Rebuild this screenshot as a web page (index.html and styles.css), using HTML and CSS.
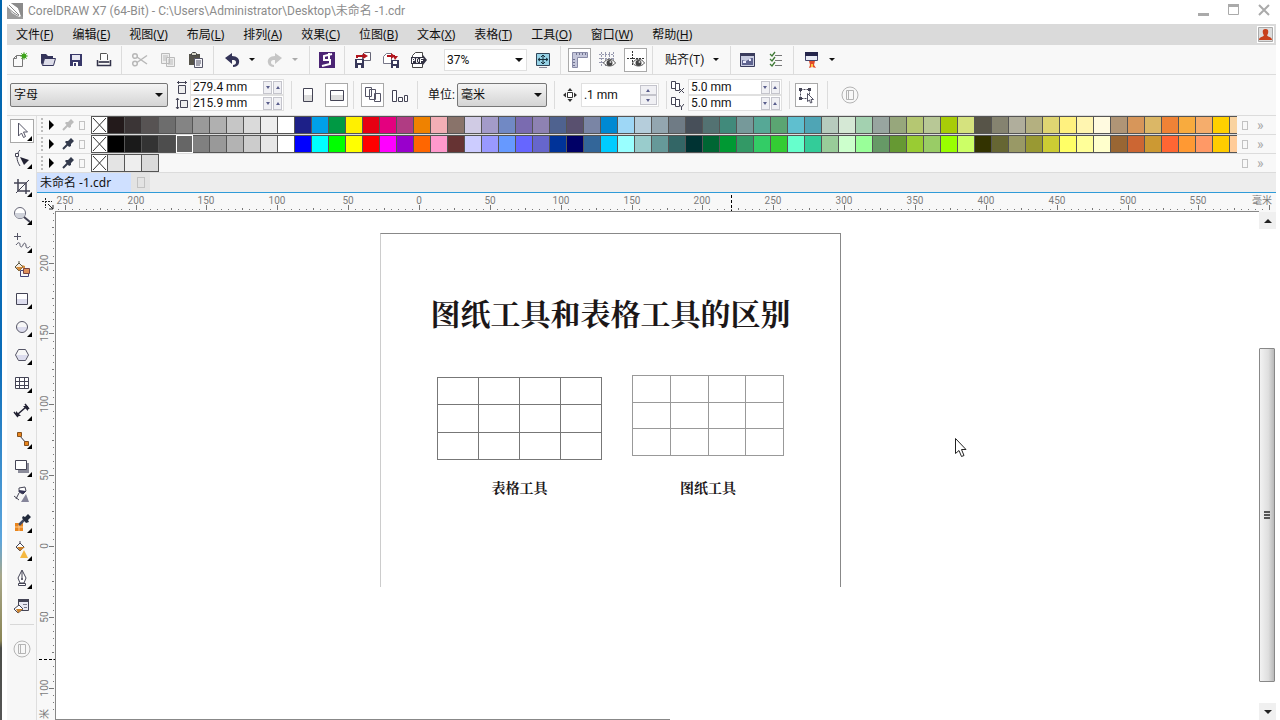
FILE: index.html
```html
<!DOCTYPE html>
<html lang="zh-CN">
<head>
<meta charset="utf-8">
<title>CorelDRAW X7 (64-Bit)</title>
<link rel="stylesheet" href="styles.css">
</head>
<body>
<div class="desktop"></div>
<div class="app">
  <header class="titlebar">
    <svg class="logo" width="16" height="16" viewBox="0 0 16 16"><path fill="#9c9c9c" d="M0 0h16v16H0z"/><path fill="#fff" d="M0 0h4l7 5 3 8-2 1-7-4-5-7z"/><path fill="#8b8b8b" d="M4 0l7 5 3 8 2 1V0z"/><path stroke="#8b8b8b" fill="none" d="M2 2l10 10M1 5l6 5 5 3"/></svg>
    <span class="title">CorelDRAW X7 (64-Bit) - C:\Users\Administrator\Desktop\未命名 -1.cdr</span>
    <div class="winctl">
      <button aria-label="最小化"><svg width="12" height="12"><path fill="#aaa" d="M0 9h11v3H0z"/></svg></button>
      <button aria-label="最大化"><svg width="12" height="12"><path fill="none" stroke="#aaa" d="M.5.5h10v10H.5z"/><path fill="#aaa" d="M0 0h11v3H0z"/></svg></button>
      <button aria-label="关闭"><svg width="13" height="12"><path fill="none" stroke="#aaa" stroke-width="2" d="M1 1l10 10M11 1L1 11"/></svg></button>
    </div>
  </header>

  <nav class="menubar">
    <button>文件(<u>F</u>)</button><button>编辑(<u>E</u>)</button><button>视图(<u>V</u>)</button><button>布局(<u>L</u>)</button><button>排列(<u>A</u>)</button><button>效果(<u>C</u>)</button><button>位图(<u>B</u>)</button><button>文本(<u>X</u>)</button><button>表格(<u>T</u>)</button><button>工具(<u>O</u>)</button><button>窗口(<u>W</u>)</button><button>帮助(<u>H</u>)</button>
    <button class="account" aria-label="登录"><svg width="17" height="17"><path fill="#fff" d="M0 0h17v17H0z"/><path fill="#ddd" stroke="#aaa" d="M1.500 1.500h14v14h-14z"/><path fill="#c8401c" d="M8.500 3c2.500 0 3 1.500 2.700 3.500-.2 1.500-.9 2-1 3 .2 1.500 4.800 1 4.800 4.500H2c0-3.500 4.600-3 4.800-4.500-.1-1-.8-1.500-1-3C5.500 4.500 6 3 8.500 3z"/></svg></button>
  </nav>

  <div class="toolbar standard">
    <button class="tool" aria-label="新建"><svg width="18" height="18"><path fill="#fafafa" stroke="#777" d="M2.500 15.500v-8l3-3h6v11zM2.500 7.500h3v-3"/><circle cx="13" cy="5" r="2.500" fill="#3da51a"/><path stroke="#3da51a" d="M13 1v8M9 5h8M10 2l6 6M16 2l-6 6" stroke-width=".7"/></svg></button>
    <button class="tool" aria-label="打开"><svg width="18" height="18"><path fill="#34345a" d="M2 3h5l2 2h5v3H6l-3 6-1-2z"/><path fill="#dcdce8" stroke="#34345a" d="M5.500 7.500h11l-2 7h-11z"/></svg></button>
    <button class="tool" aria-label="保存"><svg width="18" height="18"><path fill="#39396a" d="M3 3h12v12H3z"/><path fill="#e8e8f2" d="M5 4h8v5H5z"/><path fill="#fff" d="M6 11h5v4H6z"/><path fill="#39396a" d="M7 12h2v3H7z"/></svg></button>
    <button class="tool" aria-label="打印"><svg width="18" height="18"><path fill="#fff" stroke="#555" d="M5.500 9V2.500h6l1 1V9"/><path fill="#bbb" d="M3 10h13v2H3z"/><path fill="none" stroke="#33334a" stroke-width="1.500" d="M2.500 9v5.500h13V9M4 11h10"/></svg></button>
    <i class="sep"></i>
    <button class="tool" aria-label="剪切"><svg width="18" height="18"><g fill="none" stroke="#b8b8b8" stroke-width="1.500"><circle cx="4" cy="5" r="2.300"/><circle cx="4" cy="12.500" r="2.300"/><path d="M6 6l10 7M6 11.500l10-7"/></g></svg></button>
    <button class="tool" aria-label="复制"><svg width="18" height="18"><path fill="#eee" stroke="#bbb" d="M2.500 2.500h8v10h-8zM7.500 6.500h8v9h-8zM4 5h5M4 7h3M4 9h3M9 9h5M9 11h5M9 13h5"/></svg></button>
    <button class="tool" aria-label="粘贴"><svg width="18" height="18"><path fill="#55534a" d="M2 3h11v11H2z"/><path fill="#d8d8c8" stroke="#444" d="M4.500 2.500l1-1h3l1 1v2h-5z"/><path fill="#f4f4f8" stroke="#556" d="M7.500 7.500h8v9h-8zM9 10h5M9 12h5M9 14h4"/></svg></button>
    <i class="sep"></i>
    <button class="tool" aria-label="撤消"><svg width="18" height="18"><path fill="#343458" d="M2 7l7-5v3c5 0 8 3 7 7-.5 2.500-3 4-6 4v-2c2 0 3-1 3-2.500C13 9.500 12 9 9 9v4z"/></svg></button>
    <button class="drop" aria-label="撤消列表"></button>
    <button class="tool redo" aria-label="重做"><svg width="18" height="18"><path fill="#c6c6c6" d="M16 7L9 2v3C4 5 1 8 2 12c.5 2.500 3 4 6 4v-2c-2 0-3-1-3-2.500C5 9.500 6 9 9 9v4z"/></svg></button>
    <button class="drop dim" aria-label="重做列表"></button>
    <i class="sep wide"></i>
    <button class="tool" aria-label="欢迎屏幕"><svg width="18" height="18"><path fill="#4b2474" d="M1 1h16v16H1z"/><path stroke="#fff" stroke-width="2" fill="none" d="M14 3L6 5v4h6v4l-8 2M11 2v6"/></svg></button>
    <i class="sep"></i>
    <button class="tool" aria-label="导入"><svg width="18" height="18"><path fill="#fff" stroke="#667" d="M8.500 3.500l2-2h6v8h-8z"/><path fill="#39395a" d="M1 8h9v9H1z"/><path fill="#fff" d="M3 9h5v3H3zM4 14h3v3H4z"/><path fill="none" stroke="#b0141c" stroke-width="2" d="M3 7V5h7"/><path fill="#b0141c" d="M9 2l5 3-5 3z"/></svg></button>
    <button class="tool" aria-label="导出"><svg width="18" height="18"><path fill="#fff" stroke="#778" d="M1.500 5.500l3-3h5v10h-8z"/><path fill="#39395a" d="M9 9h8v8H9z"/><path fill="#fff" d="M11 10h4v3h-4zM11 15h3v2h-3z"/><path fill="none" stroke="#b0141c" stroke-width="2" d="M5 5h8"/><path fill="#b0141c" d="M9 2l4 3-4 3zM11 5h5l-3 4z"/></svg></button>
    <button class="tool" aria-label="发布为 PDF"><svg width="18" height="18"><path fill="#fff" stroke="#444" d="M2.500 6V4.500l3-3h7V6M2.500 12v4.500h10V13"/><path fill="#333344" d="M1 6h12V4l4 5-4 5v-1H1z"/><path fill="none" stroke="#fff" d="M2.500 12V7.500h2v2h-2M6.500 7.500h1l1 1v2l-1 1h-1zM10.500 12V7.500h3M10 9.500h3"/></svg></button>
    <span class="field zoom"><input type="text" value="37%" aria-label="缩放级别"><button class="drop" aria-label="缩放列表"></button></span>
    <button class="tool" aria-label="全屏预览"><svg width="18" height="18"><path fill="#96d2e6" stroke="#2f4558" d="M2.500 2.500h13v12h-13z"/><path stroke="#16303c" d="M9 4v9M4 8.500h10M7 6l2-2 2 2M7 11l2 2 2-2M6 7L4 8.500 6 10M12 7l2 1.500L12 10" fill="none"/><path fill="#889" d="M5 16h8v1H5z"/></svg></button>
    <i class="sep"></i>
    <button class="tool on" aria-label="标尺"><svg width="18" height="18"><path fill="#c4c6da" stroke="#8a8ca8" d="M1.500 1.500h15v5h-10v10h-5z"/><path stroke="#6f7290" d="M5.500 2v2M8.500 2v2M11.500 2v2M14.500 2v2M2 8.500h2M2 11.500h2M2 14.500h2"/></svg></button>
    <button class="tool" aria-label="网格"><svg width="18" height="18"><path stroke="#9698ae" stroke-dasharray="2 1" d="M1 3.500h15M1 7.500h15M1 11.500h8M3.500 1v15M7.500 1v15M11.500 1v8M15.500 1v8"/><use href="#eye"/></svg></button>
    <button class="tool on" aria-label="辅助线"><svg width="18" height="18"><path stroke="#333" stroke-dasharray="2 1" d="M0 7.500h18M5.500 0v14"/><use href="#eye"/></svg></button>
    <i class="sep"></i>
    <button class="snap">贴齐(T)</button>
    <button class="drop" aria-label="贴齐列表"></button>
    <i class="sep wide"></i>
    <button class="tool" aria-label="选项"><svg width="18" height="18"><path fill="#c8cce0" stroke="#3a3c5c" d="M1.500 2.500h14v13h-14z"/><path fill="#3a3c5c" d="M1 2h15v3H1z"/><path fill="#5f6490" d="M3 9l4 1 4-2 1-1h2v7H3z"/><path fill="#eef" d="M10 8h2v2h-2zM4 10h3v2H4z"/></svg></button>
    <button class="tool" aria-label="项目列表"><svg width="18" height="18"><path stroke="#777" d="M8 4.500h7M8 9.500h7M8 14.500h7"/><path fill="none" stroke="#3f7a35" stroke-width="1.300" d="M3 3l2 2 3-4M3 8l2 2 3-4M3 13l2 2 3-4"/></svg></button>
    <i class="sep"></i>
    <button class="tool" aria-label="应用程序启动器"><svg width="18" height="18"><path fill="#e9ecf6" stroke="#45466c" d="M2.500 1.500h12v8h-12z"/><path fill="#25264c" d="M2 1h13v4H2z"/><path fill="#e24a28" d="M6 10h6l-1 4 2 3-4-1-3 1 1-3z"/><path fill="#ffc144" d="M8 13h2v3H8z"/></svg></button>
    <button class="drop" aria-label="启动器列表"></button>
  </div>

  <div class="toolbar property">
    <label class="combo paper"><select aria-label="页面大小"><option>字母</option></select></label>
    <span class="icons2"><svg width="14" height="14"><path fill="#eee" stroke="#445" d="M3.500 5.500h7v8h-7zM2 2.500h10M3.500 1v3M10.500 1v3"/></svg><svg width="14" height="14"><path fill="#eee" stroke="#445" d="M5.500 4.500h7v7h-7zM2.500 2v11M1 4l1.500-2L4 4M1 11l1.500 2L4 11"/></svg></span>
    <span class="pair">
      <span class="field"><input type="text" value="279.4 mm" aria-label="页面宽度"><button class="st dn" aria-label="减小"></button><button class="st up" aria-label="增大"></button></span>
      <span class="field"><input type="text" value="215.9 mm" aria-label="页面高度"><button class="st dn" aria-label="减小"></button><button class="st up" aria-label="增大"></button></span>
    </span>
    <i class="sep gap"></i>
    <button class="tool" aria-label="纵向"><svg width="18" height="18"><path fill="#fff" stroke="#445" d="M4.500 2.500h9v13h-9z"/><path fill="#ddd" d="M5 9h8v6H5z"/></svg></button>
    <button class="tool on" aria-label="横向"><svg width="18" height="18"><path fill="#fff" stroke="#445" d="M2.500 4.500h13v10h-13z"/><path fill="#ddd" d="M3 9h12v5H3z"/></svg></button>
    <i class="sep"></i>
    <button class="tool on" aria-label="所有页面"><svg width="18" height="18"><path fill="#fff" stroke="#556" d="M1.500 1.500h6v9h-6zM5.500 3.500h6v10h-6zM10.500 7.500h6v8h-6z"/></svg></button>
    <button class="tool" aria-label="当前页"><svg width="18" height="18"><path fill="#fff" stroke="#445" d="M1.500 4.500h4v11h-4zM7.500 11.500h4v4h-4zM13.500 9.500h3v6h-3z"/></svg></button>
    <i class="sep"></i>
    <label class="unit" for="unit">单位:</label>
    <span class="combo units"><select id="unit"><option>毫米</option></select></span>
    <i class="sep gap"></i>
    <span class="icons1"><svg width="14" height="14"><path fill="#fff" stroke="#333" d="M4.500 4.500h5v5h-5z"/><path fill="#333" d="M7 0l2.500 3h-5zM7 14l2.500-3h-5zM0 7l3-2.500v5zM14 7l-3-2.500v5z"/></svg></span>
    <span class="field nudge"><input type="text" value=".1 mm" aria-label="微调距离"><span class="vspin"><button class="st up" aria-label="增大"></button><button class="st dn" aria-label="减小"></button></span></span>
    <i class="sep gap"></i>
    <span class="icons2 dup"><svg width="14" height="14"><path fill="#fff" stroke="#445" d="M1.500 1.500h4v7h-4zM5.500 3.500h4v7h-4zM9 8l5 5M14 8l-5 5"/></svg><svg width="14" height="14"><path fill="#fff" stroke="#445" d="M1.500 1.500h4v7h-4zM5.500 3.500h4v7h-4z"/><path fill="none" stroke="#445" d="M9 8l2.500 3L14 8M11.500 11v3"/></svg></span>
    <span class="pair">
      <span class="field"><input type="text" value="5.0 mm" aria-label="再制距离 X"><button class="st dn" aria-label="减小"></button><button class="st up" aria-label="增大"></button></span>
      <span class="field"><input type="text" value="5.0 mm" aria-label="再制距离 Y"><button class="st dn" aria-label="减小"></button><button class="st up" aria-label="增大"></button></span>
    </span>
    <i class="sep gap"></i>
    <button class="tool on" aria-label="视为已填充"><svg width="18" height="18"><path fill="none" stroke="#445" stroke-dasharray="2 1" d="M3.500 3.500h9v9h-9z"/><path fill="#445" d="M2 2h3v3H2zM11 2h3v3h-3zM2 11h3v3H2z"/><path fill="#fff" stroke="#556" d="M10.500 7.500v8l2-1.500 1 3 1.500-.5-1-3h2.500z"/></svg></button>
    <i class="sep gap"></i>
    <button class="tool quick" aria-label="快速自定义"><svg width="18" height="18"><use href="#custom"/></svg></button>
  </div>

  <div class="work">
    <aside class="toolbox">
      <button class="on fly" aria-label="选择"><svg width="24" height="24"><path fill="#fff" stroke="#556" d="M8.500 4v13l3-3 2 4.500 2-1-2-4.500h4z"/></svg></button>
      <button class="fly" aria-label="形状"><svg width="24" height="24"><path fill="none" stroke="#445" d="M10 3c-4 4-4 10 0 16"/><path fill="#fff" stroke="#445" d="M5.500 6.500h3v3h-3z"/><path fill="#223" d="M10 10l9 3-5 5z"/></svg></button>
      <button class="fly" aria-label="裁剪"><svg width="24" height="24"><path fill="none" stroke="#445" stroke-width="1.500" d="M4 8h12v11M8 4v12h12"/><path stroke="#445" d="M6 18L19 5"/></svg></button>
      <button class="fly" aria-label="缩放"><svg width="24" height="24"><circle cx="10" cy="10" r="5.500" fill="#fff" stroke="#667"/><path fill="#cfd2da" d="M5 10h10c0 7-10 7-10 0"/><path stroke="#445" stroke-width="2" d="M14 14l6 5"/></svg></button>
      <button class="fly" aria-label="手绘"><svg width="24" height="24"><path fill="none" stroke="#556" d="M7.500 2v7M4 5.500h7M6 14c3-4 4-2 4 0s2 3 3 0 3-2 3 1 3 2 4 0"/></svg></button>
      <button aria-label="智能填充"><svg width="24" height="24"><path fill="#f6ede0" stroke="#554" d="M5 8l4-4 4 4-4 4zM9 4V2"/><path fill="#d38a3a" d="M6 8h7l-4 4zM12 6l3 1v6z"/><path fill="none" stroke="#447" d="M10.500 11.500h8v6h-8z"/><path fill="#e0905a" stroke="#744" d="M13.500 9.500h6v5h-6z"/></svg></button>
      <button class="fly" aria-label="矩形"><svg width="24" height="24"><path fill="#fff" stroke="#445" d="M6.500 6.500h11v11h-11z"/><path fill="#dde" d="M7 12h10v5H7z"/></svg></button>
      <button class="fly" aria-label="椭圆形"><svg width="24" height="24"><path fill="#dde" d="M7 12h10c0 6.500-10 6.500-10 0"/><circle cx="12" cy="12" r="5.500" fill="none" stroke="#556"/></svg></button>
      <button class="fly" aria-label="多边形"><svg width="24" height="24"><path fill="#dde" d="M6 12h12l-3 5H9z"/><path fill="none" stroke="#556" d="M5.500 12l3-5.500h7l3 5.500-3 5.500h-7z"/></svg></button>
      <button class="fly" aria-label="表格"><svg width="24" height="24"><path fill="#fff" stroke="#445" d="M5.500 6.500h13v11h-13zM9.500 6v11M14.500 6v11M5 10.500h13M5 14.500h13"/></svg></button>
      <button class="fly" aria-label="平行度量"><svg width="24" height="24"><path fill="#223" d="M6 17v-5l5 5zM18 7v5l-5-5z"/><path stroke="#223" stroke-width="1.500" d="M8 15l8-7M4 13l4 5M15 5l4 5"/></svg></button>
      <button class="fly" aria-label="直线连接器"><svg width="24" height="24"><path stroke="#334" d="M9 8l8 9"/><path fill="#e9851d" stroke="#84501f" d="M7.500 5.500h4v4h-4zM14.500 14.500h4v4h-4z"/></svg></button>
      <button class="fly" aria-label="阴影"><svg width="24" height="24"><path fill="#8b8c9a" d="M8 8h11v10H8z"/><path fill="#fff" stroke="#445" d="M5.500 5.500h11v9h-11z"/></svg></button>
      <button aria-label="透明度"><svg width="24" height="24"><path fill="#fff" stroke="#445" d="M9 5l6-1 1 4-3 3-4-2zM9 10l-3 6M4 13l5 4"/><path fill="#335" d="M9 7l7 1-3 3-4-2z"/><path fill="#85859a" d="M16 11l3 8h-8z"/></svg></button>
      <button class="fly" aria-label="颜色滴管"><svg width="24" height="24"><path fill="#e9851d" d="M5 12h8v8H5z"/><path stroke="#ffc98d" d="M9 12v8M5 16h8"/><path stroke="#444a60" stroke-width="2.500" d="M9 14l7-7"/><path fill="#222a3c" d="M13 5l2 1 3-3 3 3-3 3 1 2-3 1-4-5z"/></svg></button>
      <button class="fly" aria-label="交互式填充"><svg width="24" height="24"><path fill="#fff" stroke="#445" d="M6 8l4-4 4 4-4 4zM10 4V2"/><path fill="#c9812c" d="M7 8h8l-5 4z"/><path fill="#f5b83f" d="M14 11l4 8h-8z"/></svg></button>
      <button class="fly" aria-label="轮廓笔"><svg width="24" height="24"><path fill="#fff" stroke="#445" d="M12 3l4 8-2 5h-4l-2-5zM12 4v7M8.500 16.500h7v2h-7z"/><circle cx="12" cy="12" r="1" fill="#334"/></svg></button>
      <button aria-label="编辑填充"><svg width="24" height="24"><path fill="#e9e9f2" stroke="#445" d="M8.500 4.500h10v11h-10z"/><path fill="#445" d="M8 4h11v3H8z"/><path stroke="#778" d="M13 9.500h4M14 12.500h3"/><path fill="#fff" stroke="#445" d="M4 14l5-4 4 4-5 4z"/><path fill="#c9812c" d="M6 14h7l-5 4z"/></svg></button>
      <hr>
      <button aria-label="快速自定义"><svg width="18" height="18"><use href="#custom"/></svg></button>
    </aside>

    <main class="main">
      <div class="palettes" id="palettes"></div>
      <div class="tabs">
        <button class="tab">未命名 -1.cdr</button>
        <button class="tab add" aria-label="新建文档"><i class="box"></i></button>
      </div>
      <div class="view">
        <div class="corner"><svg width="12" height="12"><path stroke="#222" stroke-dasharray="2 1" d="M3.500 0v10M0 3.500h10"/><path fill="none" stroke="#222" d="M6 6l5 5M7 11h4V7"/></svg></div>
        <svg class="ruler-h" id="ruler-h"></svg>
        <svg class="ruler-v" id="ruler-v"></svg>
        <div class="canvas">
          <section class="page">
            <h1>图纸工具和表格工具的区别</h1>
            <div class="figures">
              <figure class="fig-table"><div class="cells"><i></i><i></i><i></i><i></i><i></i><i></i><i></i><i></i><i></i><i></i><i></i><i></i></div><figcaption>表格工具</figcaption></figure>
              <figure class="fig-graph"><div class="cells"><i></i><i></i><i></i><i></i><i></i><i></i><i></i><i></i><i></i><i></i><i></i><i></i></div><figcaption>图纸工具</figcaption></figure>
            </div>
          </section>
          <div class="edge"></div>
          <svg class="pointer" width="14" height="22"><path fill="#fff" stroke="#222" d="M1.500 1.500v15l3.500-3 2.500 6 2.500-1-2.500-6h4.500z"/></svg>
        </div>
        <div class="scroll">
          <button class="up" aria-label="向上滚动"></button>
          <div class="track"><div class="thumb"><svg width="8" height="9"><path stroke="#555" stroke-width="2" d="M1 1h6M1 4h6M1 7h6"/></svg></div></div>
          <button class="down" aria-label="向下滚动"></button>
        </div>
      </div>
    </main>
  </div>
</div>
<svg class="defs" width="0" height="0"><defs>
  <g id="eye"><path fill="#fff" stroke="#555" d="M5.500 12c3-5 9-5 12 0-3 4-9 4-12 0z"/><circle cx="11.500" cy="12" r="3" fill="#444"/><circle cx="12.500" cy="11" r="1" fill="#ccc"/></g>
  <g id="custom" fill="none" stroke="#b4b4b4"><circle cx="9" cy="9" r="8"/><path d="M5.500 4.500h7v9h-7zM7.500 4v9"/></g>
</defs></svg>
<script src="script.js"></script>
</body>
</html>
```
FILE: styles.css
```css
* { box-sizing: border-box; }
body {
  margin: 0; height: 100vh; display: flex; overflow: hidden; background: #fff; color: #111;
  font: 12px/16px Roboto, "Noto Sans CJK SC", sans-serif;
}
button, input, select { font: inherit; color: inherit; }
button { border: 0; background: none; padding: 0; display: flex; align-items: center; justify-content: center; }
svg { display: block; flex: none; }
.defs { position: absolute; }
.desktop { width: 2px; background: linear-gradient(#0065ad 0, #0b6cb8 50%, #5ea6dc 75%, #a9a88a 80%, #8a8555 89%, #4b4d48 90%, #555 100%); }
.app { flex: 1; min-width: 0; display: flex; flex-direction: column; margin: 0 4px 0 5px; }

.titlebar { height: 24px; display: flex; align-items: flex-start; gap: 5px; padding-top: 3px; }
.title { flex: 1; color: #8c8c8c; white-space: nowrap; }
.winctl { display: flex; gap: 18px; padding: 1px 6px 0 0; }
.winctl button { width: 12px; height: 12px; }

.menubar { height: 21px; display: flex; align-items: center; gap: 19px; padding-left: 9px; background: #dadada; font-family: "Noto Sans", "Noto Sans CJK SC", sans-serif; }
.menubar button { white-space: nowrap; display: block; }
.menubar .account { margin: 0 2px 0 auto; }

.toolbar { display: flex; align-items: center; background: #f8f8f8; border-bottom: 1px solid #dcdcdc; flex: none; }
.standard { height: 30px; }
.property { height: 41px; }
.tool { width: 28px; height: 24px; flex: none; }
.standard .tool:first-child { margin-left: -1px; }
.tool.on { width: 23px; margin: 0 2px 0 3px; border: 1px solid #a9a9a9; background: #fff; }
.tool.redo { margin-left: 5px; }
.sep { width: 1px; height: 28px; margin: 0 4px 0 3px; background: #dcdcdc; flex: none; }
.sep.wide { margin: 0 3px 0 10px; }
.sep.gap { margin: 0 2px 0 7px; }
.drop { width: 8px; height: 16px; margin-left: 2px; flex: none; }
.drop::after, .combo::after { content: ""; border: 4px solid transparent; border-bottom: 0; border-top-color: #111; }
.drop.dim::after { border-top-color: #aaa; }
.drop::after { border-left-width: 3px; border-right-width: 3px; border-top-width: 3px; }
.snap { white-space: nowrap; margin: 0 6px 0 8px; }

.field { display: flex; align-items: center; background: #fff; border: 1px solid #e0e0e0; }
.field input { flex: 1; min-width: 0; width: 0; border: 0; padding: 0 0 0 2px; background: none; outline: 0; line-height: 14px; }
.zoom { width: 83px; height: 22px; margin: 0 2px 0 11px; padding-right: 3px; }
.zoom .drop::after { border-width: 4px 4px 0; }
.combo { display: flex; align-items: center; justify-content: space-between; height: 24px; padding-right: 4px; border: 1px solid #777; border-radius: 2px; background: linear-gradient(#f4f4f4, #e4e4e4 50%, #d4d4d4); }
.combo select { flex: 1; min-width: 0; appearance: none; border: 0; background: none; padding: 0 3px; outline: 0; }
.paper { width: 158px; margin: 0 6px 0 3px; }
.units { width: 90px; }
.unit { margin: 0 2px 0 6px; white-space: nowrap; }
.icons2 { display: flex; flex-direction: column; gap: 2px; margin: 0 1px; }
.icons2.dup { margin-right: 4px; }
.icons1 { margin: 0 4px 0 6px; }
.pair { width: 94px; display: flex; flex-direction: column; }
.pair .field { height: 16px; }
.st { width: 9px; height: 13px; border: 1px solid #c4c4cc; background: #f0f0f4; flex: none; margin-right: 1px; }
.st::after { content: ""; border: 2px solid transparent; }
.st.dn::after { border-bottom: 0; border-top: 3px solid #5a5e8c; }
.st.up::after { border-top: 0; border-bottom: 3px solid #5a5e8c; }
.nudge { width: 78px; height: 24px; }
.vspin .st { width: 17px; height: 10px; }
.quick { margin-left: 6px; }

.work { flex: 1; min-height: 0; display: flex; }
.toolbox { width: 30px; flex: none; display: flex; flex-direction: column; align-items: center; background: #f7f7f7; padding-top: 1px; border-right: 1px solid #dedede; }
.toolbox button { width: 24px; height: 28px; flex: none; position: relative; }
.toolbox .on { height: 24px; margin: 2px 0; border: 1px solid #a9a9a9; background: #fff; }
.toolbox .fly::after { content: ""; position: absolute; right: 2px; bottom: 4px; border: 5px solid transparent; border-width: 0 0 5px 5px; border-bottom-color: #000; }
.toolbox .on::after { right: 1px; bottom: 1px; }
.toolbox hr { width: 24px; margin: 3px 0 10px; border: 0; border-top: 1px solid #d8d8d8; flex: none; }

.main { flex: 1; min-width: 0; display: flex; flex-direction: column; }
.palette { height: 19px; display: flex; align-items: center; background: #f8f8f8; border-bottom: 1px solid #dcdcdc; }
.grip { width: 2px; height: 14px; margin: 0 6px 0 4px; background: repeating-linear-gradient(#bbb 0 2px, transparent 2px 4px); }
.arrow { width: 5px; margin-right: 7px; }
.arrow::after { content: ""; border: 5px solid transparent; border-width: 5px 0 5px 5px; border-left-color: #000; }
.box { width: 6px; height: 9px; border: 1px solid #c2c2c2; flex: none; }
.dropper { width: 14px; margin-right: 4px; }
.swatches { flex: 1; min-width: 0; display: flex; overflow: hidden; margin-left: 6px; }
.swatch { width: 17px; height: 18px; border: 1px solid #555; border-left-width: 0; flex: none; }
.swatch.none { border-left-width: 1px; background: #fff; }
.swatch.sel { outline: 1px solid #fff; outline-offset: -1px; border-color: #eee; }
.more { width: 39px; display: flex; align-items: center; gap: 9px; padding-left: 5px; color: #aaa; flex: none; }
.more button { height: 16px; font-size: 14px; }

.tabs { height: 19px; display: flex; align-items: center; background: #ededed; flex: none; }
.tab { height: 19px; width: 94px; padding-left: 3px; background: #cfe0ff; justify-content: flex-start; white-space: nowrap; font-family: "Noto Sans", "Noto Sans CJK SC", sans-serif; }
.tab.add { width: 19px; padding: 0; justify-content: center; background: #e3e3e3; }
.tab .box { width: 8px; height: 11px; }

.view { flex: 1; min-height: 0; display: grid; grid-template: 19px 1fr / 18px 1fr 17px; border-top: 1px solid #2f9bd8; background: #f8f8f8; }
.corner { display: flex; align-items: center; justify-content: center; padding: 3px 0 0 3px; }
.ruler-h { grid-column: 2 / 4; width: 100%; height: 19px; }
.ruler-v { width: 18px; height: 100%; min-height: 0; }
.ruler-h text, .ruler-v text { font: 10px Roboto, "Noto Sans CJK SC", sans-serif; fill: #7c7c7c; text-anchor: middle; }
.canvas { position: relative; overflow: hidden; background: #fff; border: 1px solid #888; border-width: 1px 0 0 1px; margin-top: -1px; }
.page { position: absolute; left: 324px; top: 21px; width: 461px; height: 354px; border: 1px solid #888; border-left-color: #ccc; border-bottom: 0; }
.page h1 { margin: 57px 0 0; text-align: center; color: #1c1718; font: 700 30px/42px "Noto Serif CJK SC", "Noto Sans CJK SC", serif; white-space: nowrap; }
.figures { display: flex; justify-content: space-between; margin: 42px 56px 0; }
.figures figure { margin: 0; text-align: center; }
.fig-table { width: 165px; padding-top: 2px; }
.fig-graph { width: 152px; }
.cells { display: grid; grid-template-columns: repeat(4, 1fr); border: 1px solid #777; border-width: 1px 0 0 1px; height: 83px; }
.fig-graph .cells { border-color: #999; height: 81px; }
.cells i { border: 1px solid #777; border-width: 0 1px 1px 0; }
.fig-graph .cells i { border-color: #999; }
figcaption { margin-top: 17px; color: #1c1718; font: 700 14px/20px "Noto Serif CJK SC", "Noto Sans CJK SC", serif; }
.fig-graph figcaption { margin-top: 21px; }
.edge { position: absolute; left: 0; bottom: 0; width: 51%; height: 1px; background: #888; }
.pointer { position: absolute; left: 898px; top: 225px; }
.scroll { display: flex; flex-direction: column; background: #fff; }
.scroll button { height: 17px; width: 17px; background: #f0f0f0; flex: none; }
.scroll button::after { content: ""; border: 4px solid transparent; }
.scroll .up::after { border-top: 0; border-bottom-color: #222; }
.scroll .down::after { border-bottom: 0; border-top-color: #222; }
.track { flex: 1; display: flex; flex-direction: column; padding: 119px 1px 21px 0; }
.thumb { flex: 1; display: flex; align-items: center; justify-content: center; border: 1px solid #888; border-radius: 1px; background: linear-gradient(90deg, #f2f2f2, #dedede 60%, #b8b8b8); }
```
FILE: script.js
```js
const palettes = [
  {
    dim: true,
    colors: '231a1b 3b3536 575353 6d6d6d 848484 9a9a9a b0b0b0 c6c6c6 dadada eeeeee ffffff 1d2088 00a0e9 009944 fff000 e60012 e4007f b03c83 ef8200 f2aeb5 89736a d0cbe4 a39bc9 7189c4 7a6bb0 8e82b2 4f628f 59506f 7a85a5 0089d2 9ed7f6 b5cddb 93a6b0 6f7b85 474f59 537272 418a7b 76999a 56a896 5ba572 5fbfcf 4fa5b5 b7cbbd d5e8d5 a3d1b0 98a5a0 97a77c b5c772 b8c896 a8cc08 d5e27e 575448 858370 b0ae9c b4b080 dfd572 fff17f fff5b0 fffae0 b09576 d7965a dbb766 ef8236 f8ab3e f5ad6c ffd000 f9d3a0'
  },
  {
    selected: 4,
    colors: '000000 1a1a1a 333333 4d4d4d 666666 808080 999999 b3b3b3 cccccc e6e6e6 ffffff 0000ff 00ffff 00ff00 ffff00 ff0000 ff00ff 9900cc ff6600 ff99cc 663333 ccccff 9999ff 6699ff 6666ff 6666cc 003399 000066 336699 00ccff 99ffff 99cccc 669999 336666 003333 006633 009933 339966 33cc66 33cc33 66ffcc 33cc99 99cc99 ccffcc 99ff99 669966 669933 99cc33 99cc66 99ff00 ccff66 333300 666633 999966 999933 cccc33 ffff66 ffff99 ffffcc 996633 cc6633 cc9933 ff6633 ff9933 ff9966 ffcc00 ffcc99'
  },
  { colors: 'e4e4e4 eeeeee dadada' }
];

document.getElementById('palettes').innerHTML = palettes.map(p => {
  const ink = p.dim ? '#bbb' : '#333a4c';
  const swatches = p.colors.split(' ').map((c, i) =>
    `<button class="swatch${i === p.selected ? ' sel' : ''}" aria-label="#${c}" style="background:#${c}"></button>`).join('');
  return `<div class="palette"><i class="grip"></i><button class="arrow" aria-label="调色板菜单"></button>
    <button class="dropper" aria-label="滴管"><svg width="14" height="14"><path stroke="${ink}" stroke-width="2" d="M2 12l7-7"/><path fill="${ink}" d="M5 4l2 0 3-3 3 3-3 3 0 2-2 1-4-5z"/></svg></button>
    <i class="box"></i><div class="swatches"><button class="swatch none" aria-label="无色"><svg width="15" height="16"><path stroke="#333" d="M1 1l13 14M14 1L1 15"/></svg></button>${swatches}</div>
    <div class="more"><i class="box"></i><button aria-label="更多颜色">»</button></div></div>`;
}).join('');

const PX_PER_5MM = 7.085;

function ticks(origin, from, to, line, label) {
  let out = '';
  for (let mm = from; mm <= to; mm += 5) {
    const pos = Math.round(origin + mm / 5 * PX_PER_5MM);
    const len = mm % 50 === 0 ? 5 : mm % 25 === 0 ? 2 : 1;
    out += line(pos + 0.5, len);
    if (mm % 50 === 0) out += label(pos, Math.abs(mm));
  }
  return out;
}

document.getElementById('ruler-h').innerHTML =
  ticks(364, -255, 600,
    (x, n) => `<path stroke="#777" d="M${x} ${17 - n}V17"/>`,
    (x, t) => t === 600 ? '' : `<text x="${x}" y="11">${t}</text>`) +
  '<text x="1207" y="11">毫米</text><path stroke="#000" stroke-dasharray="3 2" d="M676.5 2v16"/>';

document.getElementById('ruler-v').innerHTML =
  ticks(334, -235, 115,
    (y, n) => `<path stroke="#777" d="M${17 - n} ${y}H17"/>`,
    (y, t) => `<text transform="translate(11 ${y}) rotate(-90)">${t}</text>`) +
  '<text transform="translate(11 502) rotate(-90)">米</text><path stroke="#000" stroke-dasharray="3 2" d="M2 447.5h16"/>';
```
